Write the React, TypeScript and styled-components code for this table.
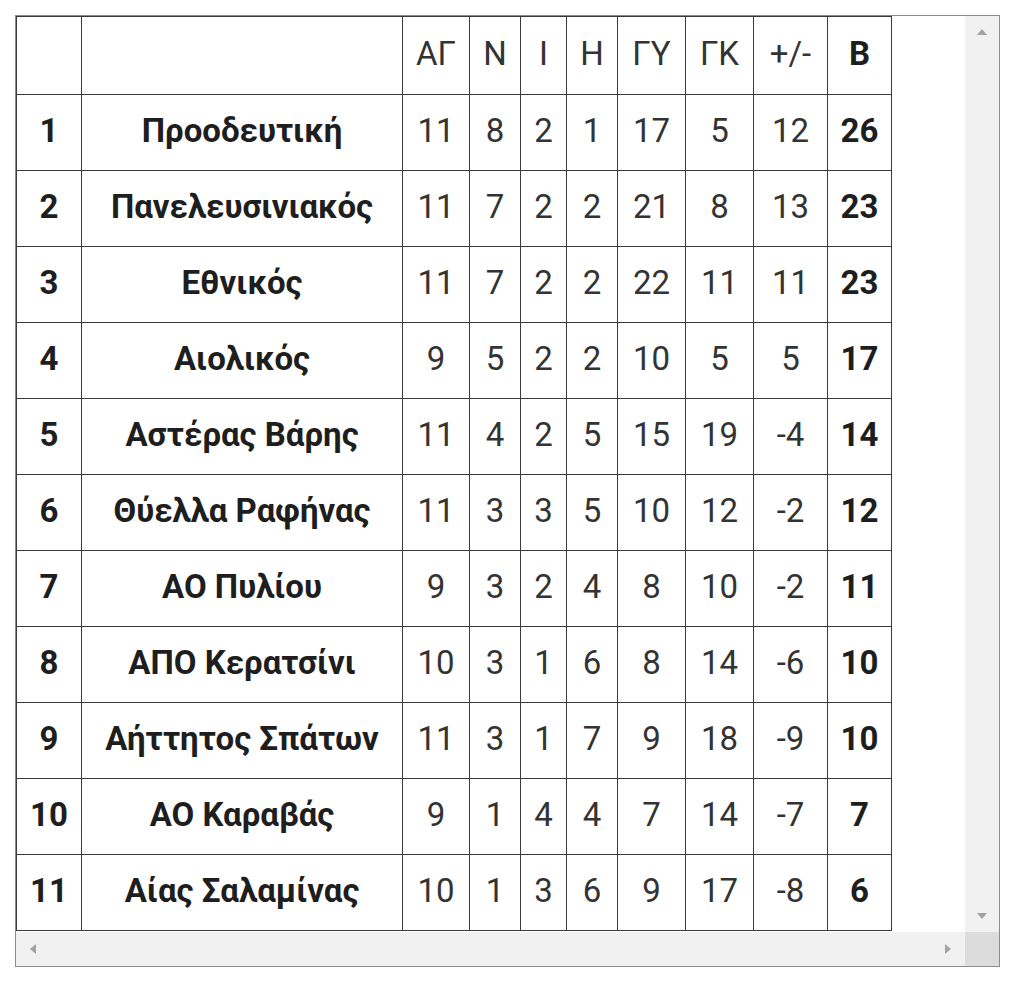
import styled, { createGlobalStyle } from "styled-components";

const GlobalStyle = createGlobalStyle`
  body {
    margin: 0;
    padding: 15px;
    background: #ffffff;
    font-family: Roboto, "Liberation Sans", sans-serif;
  }
`;

const Frame = styled.div`
  width: 983px;
  height: 950px;
  border: 1px solid #8c8c8c;
  display: grid;
  grid-template-columns: 1fr 34px;
  grid-template-rows: 1fr 34px;
  background: #ffffff;
`;

const Content = styled.div`
  overflow: hidden;
`;

const Table = styled.table`
  border-collapse: collapse;
  table-layout: fixed;
  color: #262626;
`;

const Row = styled.tr<{ $head?: boolean }>`
  height: ${(p) => (p.$head ? 78 : 76)}px;
`;

const Cell = styled.td<{ $bold?: boolean }>`
  border: 1px solid #3a3a3a;
  text-align: center;
  vertical-align: middle;
  padding: 0 0 5px;
  font-size: 33px;
  line-height: 1;
  font-weight: ${(p) => (p.$bold ? 700 : 400)};
  color: ${(p) => (p.$bold ? "#1e1e1e" : "#333333")};
`;

const VTrack = styled.div`
  background: #f1f1f1;
  display: flex;
  flex-direction: column;
  justify-content: space-between;
  align-items: center;
  padding: 13px 0;
`;

const HTrack = styled.div`
  background: #f1f1f1;
  display: flex;
  justify-content: space-between;
  align-items: center;
  padding: 0 14px;
`;

const Corner = styled.div`
  background: #dcdcdc;
`;

const Arrow = styled.span<{ $dir: "up" | "down" | "left" | "right" }>`
  width: 0;
  height: 0;
  border: 5px solid transparent;
  ${(p) =>
    p.$dir === "up"
      ? "border-bottom: 6px solid #a3a3a3; border-top-width: 0;"
      : p.$dir === "down"
      ? "border-top: 6px solid #a3a3a3; border-bottom-width: 0;"
      : p.$dir === "left"
      ? "border-right: 6px solid #a3a3a3; border-left-width: 0;"
      : "border-left: 6px solid #a3a3a3; border-right-width: 0;"}
`;

const widths = [65, 321, 67, 51, 46, 51, 68, 68, 74, 64];
const headers = ["", "", "ΑΓ", "Ν", "Ι", "Η", "ΓΥ", "ΓΚ", "+/-", "Β"];

const rows: (string | number)[][] = [
  [1, "Προοδευτική", 11, 8, 2, 1, 17, 5, 12, 26],
  [2, "Πανελευσινιακός", 11, 7, 2, 2, 21, 8, 13, 23],
  [3, "Εθνικός", 11, 7, 2, 2, 22, 11, 11, 23],
  [4, "Αιολικός", 9, 5, 2, 2, 10, 5, 5, 17],
  [5, "Αστέρας Βάρης", 11, 4, 2, 5, 15, 19, -4, 14],
  [6, "Θύελλα Ραφήνας", 11, 3, 3, 5, 10, 12, -2, 12],
  [7, "ΑΟ Πυλίου", 9, 3, 2, 4, 8, 10, -2, 11],
  [8, "ΑΠΟ Κερατσίνι", 10, 3, 1, 6, 8, 14, -6, 10],
  [9, "Αήττητος Σπάτων", 11, 3, 1, 7, 9, 18, -9, 10],
  [10, "ΑΟ Καραβάς", 9, 1, 4, 4, 7, 14, -7, 7],
  [11, "Αίας Σαλαμίνας", 10, 1, 3, 6, 9, 17, -8, 6],
];

const isBold = (i: number) => i === 0 || i === 1 || i === 9;

export default function App() {
  return (
    <>
      <GlobalStyle />
      <Frame>
        <Content>
          <Table>
            <colgroup>
              {widths.map((w, i) => (
                <col key={i} style={{ width: w }} />
              ))}
            </colgroup>
            <tbody>
              <Row $head>
                {headers.map((h, i) => (
                  <Cell key={i} $bold={i === 9}>
                    {h}
                  </Cell>
                ))}
              </Row>
              {rows.map((r) => (
                <Row key={r[0]}>
                  {r.map((v, i) => (
                    <Cell key={i} $bold={isBold(i)}>
                      {v}
                    </Cell>
                  ))}
                </Row>
              ))}
            </tbody>
          </Table>
        </Content>
        <VTrack>
          <Arrow $dir="up" />
          <Arrow $dir="down" />
        </VTrack>
        <HTrack>
          <Arrow $dir="left" />
          <Arrow $dir="right" />
        </HTrack>
        <Corner />
      </Frame>
    </>
  );
}
